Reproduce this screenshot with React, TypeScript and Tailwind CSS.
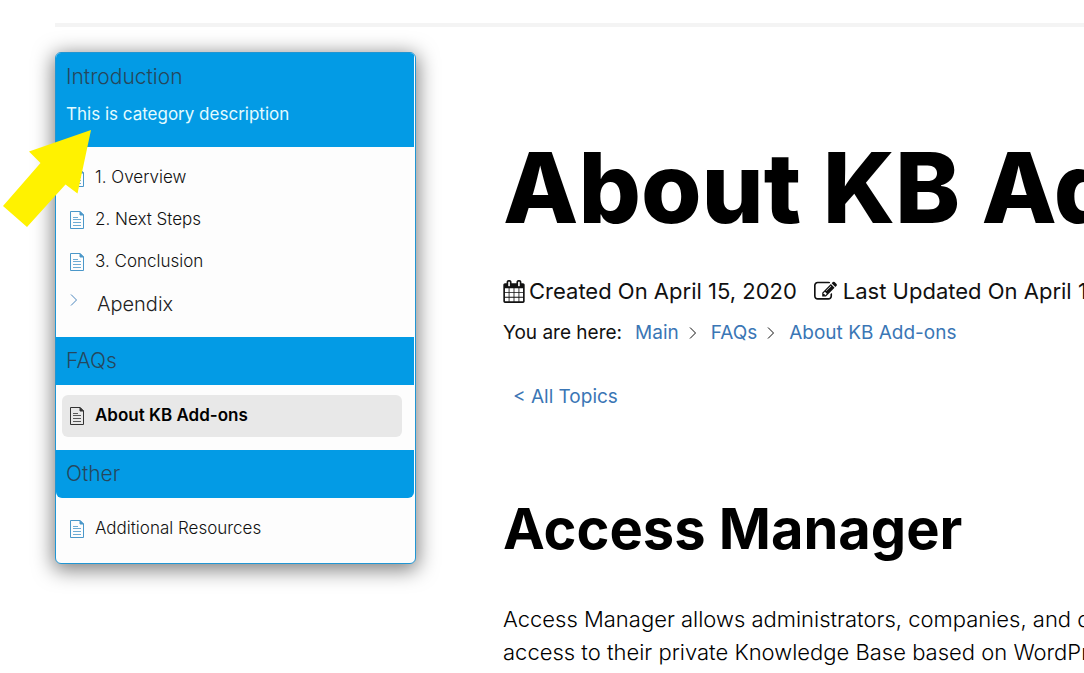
import type { ReactNode } from "react";

function DocIcon({ className }: { className: string }) {
  return (
    <svg viewBox="0 0 14 18" className={`h-[18px] w-[14px] shrink-0 ${className}`} fill="none" stroke="currentColor" strokeWidth="1" aria-hidden="true">
      <path d="M.5.5H10L13.5 4V17.5H.5Z" />
      <path d="M10 .5V4H13.5Z" fill="currentColor" />
      <path d="M3 6.5H8M3 8.5H11M3 11.5H11M3 14.5H11" strokeOpacity=".8" />
    </svg>
  );
}

function Chevron({ className }: { className: string }) {
  return (
    <svg viewBox="0 0 8 12" className={`h-3 w-2 shrink-0 ${className}`} fill="none" stroke="currentColor" strokeWidth="1" aria-hidden="true">
      <path d="M1 .5L6.500 6L1 11.500" />
    </svg>
  );
}

function CalendarIcon() {
  return (
    <svg viewBox="0 0 1664 1792" className="h-[23px] w-[22px] shrink-0" fill="currentColor" aria-hidden="true">
      <path d="M128 1664h288v-288h-288v288zM480 1664h320v-288h-320v288zM128 1312h288v-320h-288v320zM480 1312h320v-320h-320v320zM128 928h288v-288h-288v288zM864 1664h320v-288h-320v288zM480 928h320v-288h-320v288zM1248 1664h288v-288h-288v288zM864 1312h320v-320h-320v320zM512 448v-288q0-13-9.5-22.5t-22.5-9.5h-64q-13 0-22.5 9.5t-9.5 22.5v288q0 13 9.5 22.5t22.5 9.5h64q13 0 22.5-9.5t9.5-22.5zM1248 1312h288v-320h-288v320zM864 928h320v-288h-320v288zM1248 928h288v-288h-288v288zM1280 448v-288q0-13-9.5-22.5t-22.5-9.5h-64q-13 0-22.5 9.5t-9.5 22.5v288q0 13 9.5 22.5t22.5 9.5h64q13 0 22.5-9.5t9.5-22.5zM1664 384v1280q0 52-38 90t-90 38h-1408q-52 0-90-38t-38-90v-1280q0-52 38-90t90-38h128v-96q0-66 47-113t113-47h64q66 0 113 47t47 113v96h384v-96q0-66 47-113t113-47h64q66 0 113 47t47 113v96h128q52 0 90 38t38 90z" />
    </svg>
  );
}

function EditIcon() {
  return (
    <svg viewBox="0 0 1792 1792" className="size-[23px] shrink-0" fill="currentColor" aria-hidden="true">
      <path d="M888 1184l116-116-152-152-116 116v56h96v96h56zM1328 464q-16-16-33 1l-350 350q-17 17-1 33t33-1l350-350q17-17 1-33zM1408 1058v190q0 119-84.5 203.5t-203.5 84.5h-832q-119 0-203.5-84.5t-84.5-203.5v-832q0-119 84.5-203.5t203.500-84.5h832q63 0 117 25 15 7 18 23 3 17-9 29l-49 49q-14 14-32 8-23-6-45-6h-832q-66 0-113 47t-47 113v832q0 66 47 113t113 47h832q66 0 113-47t47-113v-126q0-13 9-22l64-64q15-15 35-7t20 29zM1312 320l288 288-672 672h-288v-288zM1756 452l-92 92-288-288 92-92q28-28 68-28t68 28l152 152q28 28 28 68t-28 68z" />
    </svg>
  );
}

function Category({ title, description, last, children }: { title: string; description?: string; last?: boolean; children: ReactNode }) {
  return (
    <section>
      <div className={`mr-px bg-[#039be5] px-[10px] ${description ? "pb-[19px]" : ""} ${last ? "rounded-b-md" : ""}`}>
        <h2 className="text-[21px] leading-[48px] font-light text-[#26475c]">{title}</h2>
        {description && <p className="text-[17px] leading-[27px] text-[#e3fbff]">{description}</p>}
      </div>
      <ul className={`mr-[13px] ml-[6px] pt-[10px] ${description ? "pb-3" : "pb-[13px]"}`}>{children}</ul>
    </section>
  );
}

function Article({ title, active }: { title: string; active?: boolean }) {
  return (
    <li>
      <a
        href="#"
        aria-current={active ? "page" : undefined}
        className={`flex h-[42px] items-center gap-[11px] rounded-md px-2 text-[17px] ${active ? "bg-[#e8e8e8] font-semibold text-black" : "font-light text-[#111]"}`}
      >
        <DocIcon className={active ? "text-[#333]" : "text-[#4a97c9]"} />
        {title}
      </a>
    </li>
  );
}

export default function App() {
  return (
    <div className="overflow-hidden bg-white pt-[23px] pl-[55px] font-['Inter',sans-serif] text-black">
      <hr className="h-1 border-0 bg-[#f4f4f4]" />
      <div className="flex items-start gap-[87px] pt-[25px]">
        <aside className="relative w-[361px] shrink-0">
          <nav aria-label="Articles" className="overflow-hidden rounded-md border border-[#2196d3] bg-[#fdfdfd] shadow-[0_4px_20px_2px_rgba(0,0,0,0.5)]">
            <Category title="Introduction" description="This is category description">
              <Article title="1. Overview" />
              <Article title="2. Next Steps" />
              <Article title="3. Conclusion" />
              <li>
                <button type="button" aria-expanded="false" className="flex h-[42px] w-full items-center gap-[19px] px-2 text-xl font-light text-[#222]">
                  <Chevron className="mb-2 text-[#4a86bd]" />
                  Apendix
                </button>
              </li>
            </Category>
            <Category title="FAQs">
              <Article title="About KB Add-ons" active />
            </Category>
            <Category title="Other" last>
              <Article title="Additional Resources" />
            </Category>
          </nav>
          <svg viewBox="0 0 90 98" className="absolute top-[77px] -left-[53px] h-[98px] w-[90px]" fill="#fff200" aria-hidden="true">
            <path d="M89 1L75.500 64.500L63.500 55.500L25 98L1 77L38.500 34L27 22.500Z" />
          </svg>
        </aside>
        <main className="min-w-0 flex-1 pt-[73px] whitespace-nowrap">
          <h1 className="text-[98px] leading-[126px] font-extrabold">About KB Add-ons</h1>
          <div className="mt-6 flex items-center text-[22px] leading-[33px] text-[#111]">
            <CalendarIcon />
            <span className="ml-1">Created On April 15, 2020</span>
            <span className="ml-[17px] flex items-center gap-[6px]">
              <EditIcon />
              Last Updated On April 15, 2020
            </span>
          </div>
          <nav aria-label="Breadcrumb" className="mt-2 flex items-center text-[19px] leading-[33px] text-[#111]">
            <span className="mr-[13px]">You are here:</span>
            <a href="#" className="text-[#3a76b5]">Main</a>
            <Chevron className="mr-[14px] ml-[10px]" />
            <a href="#" className="text-[#3a76b5]">FAQs</a>
            <Chevron className="mr-[14px] ml-[10px]" />
            <a href="#" className="text-[#3a76b5]">About KB Add-ons</a>
          </nav>
          <a href="#" className="mt-[31px] ml-[10px] block text-[19px] leading-[33px] text-[#3a76b5]">&lt; All Topics</a>
          <h2 className="mt-[79px] text-[56px] leading-[75px] font-bold">Access Manager</h2>
          <p className="mt-9 text-[22px] leading-[33px] font-light">
            Access Manager allows administrators, companies, and organizations
            <br />
            access to their private Knowledge Base based on WordPress
          </p>
        </main>
      </div>
    </div>
  );
}
